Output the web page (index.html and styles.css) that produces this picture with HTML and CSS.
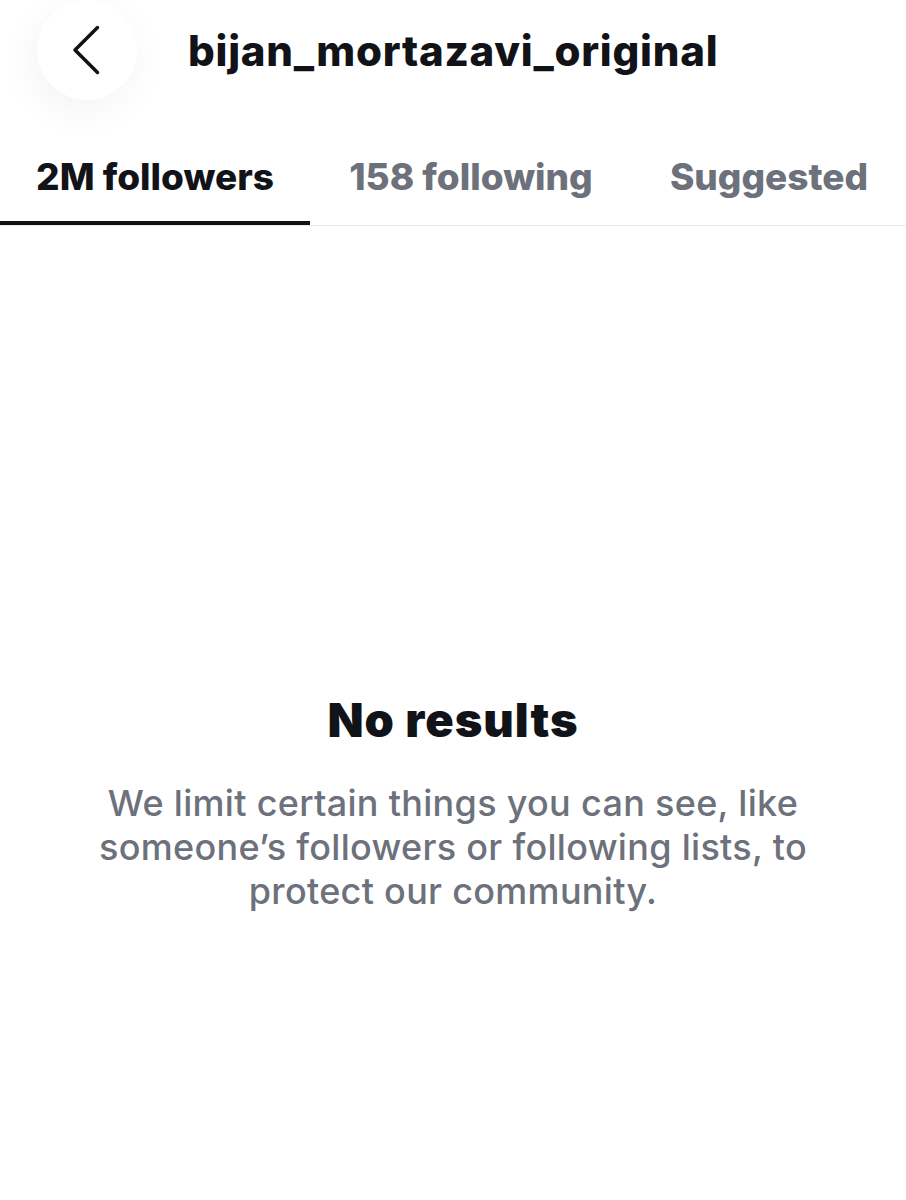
FILE: index.html
```html
<!DOCTYPE html>
<html>
<head>
<meta charset="utf-8">
<link rel="stylesheet" href="styles.css">
</head>
<body>
<div class="page">
  <header class="topbar">
    <div class="back">
      <svg width="30" height="50" viewBox="0 0 30 50"><path d="M26.5 2.5 L4 25 L26.5 47.5" fill="none" stroke="#111" stroke-width="3.5" stroke-linecap="round" stroke-linejoin="round"/></svg>
    </div>
    <h1 class="title">bijan_mortazavi_original</h1>
  </header>
  <nav class="tabs">
    <div class="tab active">2M followers</div>
    <div class="tab">158 following</div>
    <div class="tab">Suggested</div>
  </nav>
  <main class="empty">
    <h2 class="empty-title">No results</h2>
    <p class="empty-text">We limit certain things you can see, like someone’s followers or following lists, to protect our community.</p>
  </main>
</div>
</body>
</html>
```
FILE: styles.css
```css
html, body { margin: 0; padding: 0; background: #fff; }
body { font-family: Inter, "Noto Sans", sans-serif; color: #111318; }
.page { width: 906px; height: 1200px; overflow: hidden; }
.topbar { display: flex; align-items: center; height: 100px; }
.back {
  width: 100px; height: 100px; margin-left: 37px; border-radius: 50%;
  background: #fff; box-shadow: -4px 10px 40px rgba(0,0,0,0.05);
  display: flex; align-items: center; justify-content: center;
}
.back svg { margin-left: -2px; }
.title { margin: 0 0 0 51px; font-size: 42px; font-weight: 800; letter-spacing: 0.75px; }
.tabs { display: flex; margin-top: 55px; border-bottom: 1px solid #ebebed; }
.tab {
  font-size: 37px; font-weight: 800; line-height: 44px; color: #6c717c;
  padding: 0 0 22px; text-align: center; border-bottom: 4px solid transparent;
}
.tab:nth-child(1) { width: 310px; color: #111318; border-bottom-color: #111318; }
.tab:nth-child(2) { width: 322px; }
.tab:nth-child(3) { width: 274px; }
.empty { display: flex; flex-direction: column; align-items: center; text-align: center; padding-top: 467px; }
.empty-title { margin: 0; font-size: 47px; font-weight: 900; letter-spacing: 1px; line-height: 54px; }
.empty-text { margin: 34px 0 0; width: 760px; font-size: 36px; font-weight: 500; line-height: 44px; letter-spacing: 0.3px; color: #6c717c; }
```
